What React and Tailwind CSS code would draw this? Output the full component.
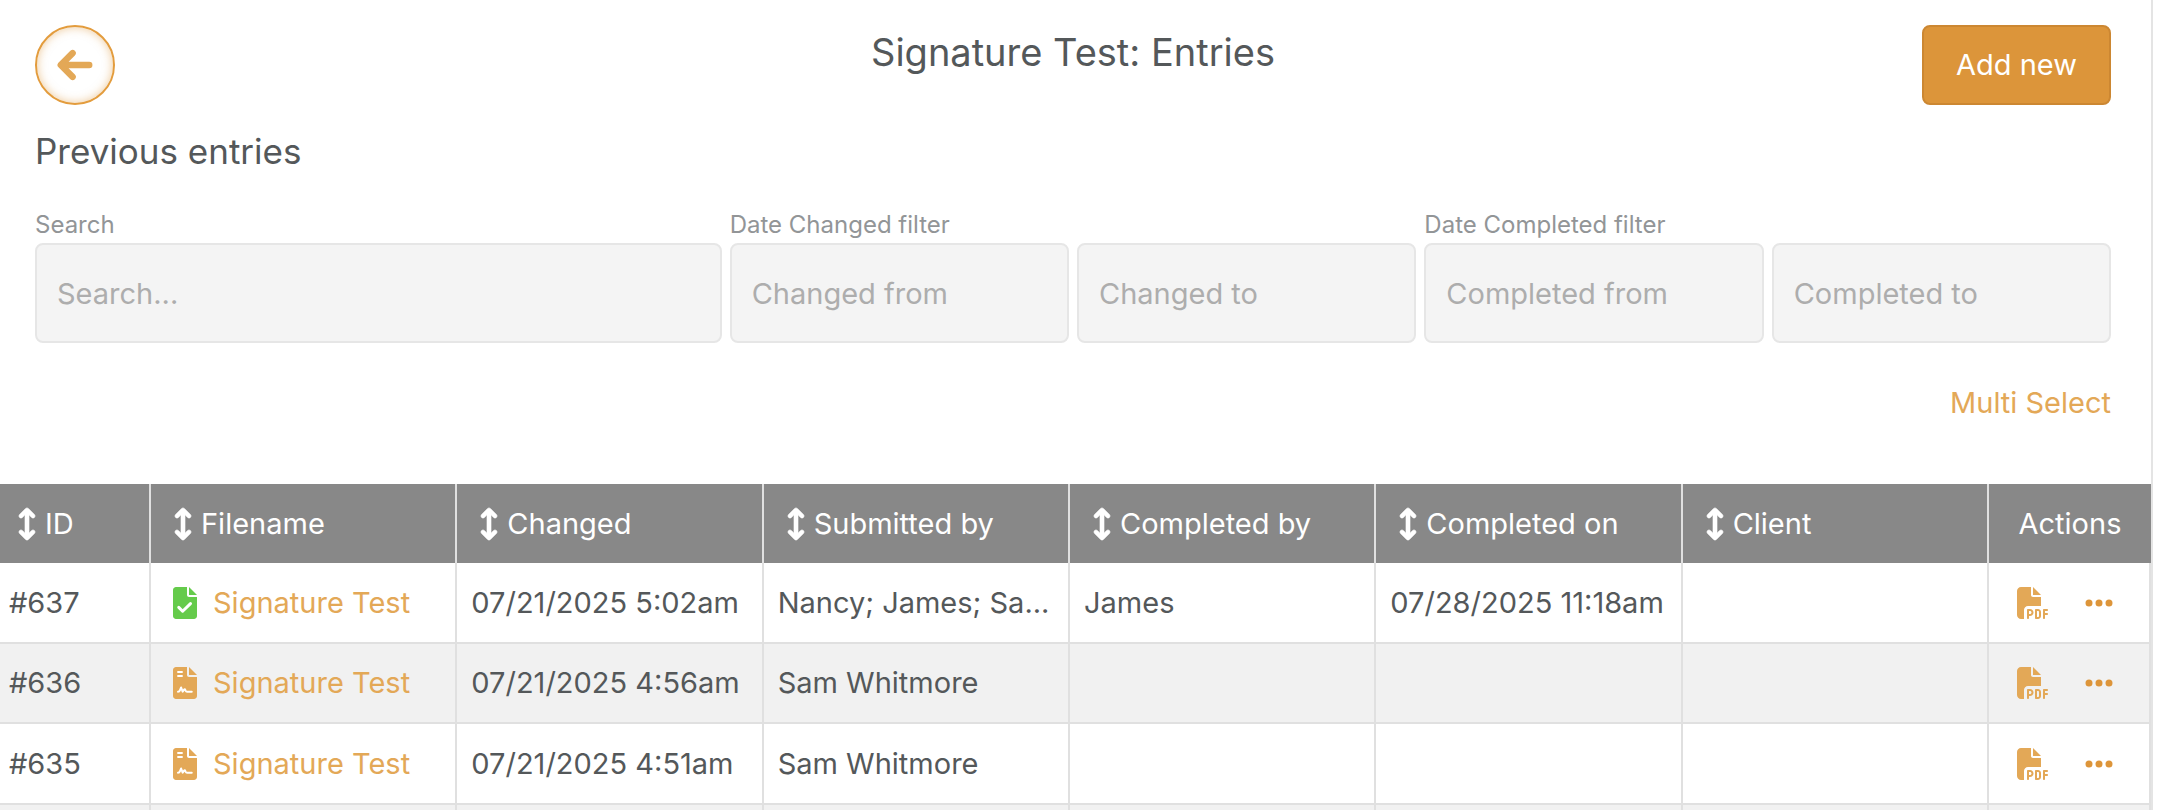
import React from "react";
import { FaArrowLeft, FaArrowsUpDown, FaEllipsis, FaFilePdf } from "react-icons/fa6";

const columns = ["ID", "Filename", "Changed", "Submitted by", "Completed by", "Completed on", "Client"];

const entries = [
  {
    id: "#637",
    filename: "Signature Test",
    complete: true,
    changed: "07/21/2025 5:02am",
    submittedBy: "Nancy; James; Sa...",
    completedBy: "James",
    completedOn: "07/28/2025 11:18am",
  },
  { id: "#636", filename: "Signature Test", changed: "07/21/2025 4:56am", submittedBy: "Sam Whitmore" },
  { id: "#635", filename: "Signature Test", changed: "07/21/2025 4:51am", submittedBy: "Sam Whitmore" },
];

const labelClass = "col-span-2 text-[24px] leading-7 text-[#929597]";
const inputClass =
  "h-[100px] w-full min-w-0 rounded-lg border-2 border-[#e6e6e6] bg-[#f4f4f4] px-5 text-[29px] text-[#54585a] placeholder:text-[#adadad]";
const cellClass = "border-r-2 border-b-2 border-[#e0e0e0] px-[14px]";

// File icon, either ticked off or still waiting for a signature
const FileIcon = ({ complete }) => (
  <svg
    viewBox="0 0 384 512"
    className={complete ? "h-8 w-6 shrink-0 text-[#65cb4b]" : "h-8 w-6 shrink-0 text-[#e3a857]"}
    fill="none"
    aria-hidden="true"
  >
    <path
      fill="currentColor"
      d="M224 128V0H48C21.5 0 0 21.5 0 48v416c0 26.5 21.5 48 48 48h288c26.5 0 48-21.5 48-48V160H256c-17.7 0-32-14.3-32-32zM256 0v128h128L256 0z"
    />
    {complete ? (
      <path stroke="#fff" strokeWidth="48" strokeLinecap="round" strokeLinejoin="round" d="M92 326l62 62 126-122" />
    ) : (
      <g stroke="#fff" strokeLinecap="round" strokeLinejoin="round">
        <path strokeWidth="30" d="M80 80h64M80 144h64" />
        <path strokeWidth="32" d="M80 396c18 0 26-8 32-26l18-42 24 66 24-32c6-8 14-8 18 2l6 16c4 12 12 16 24 16h74" />
      </g>
    )}
  </svg>
);

const Header = () => (
  <header className="grid grid-cols-[1fr_auto_1fr] items-start">
    <button
      aria-label="Back"
      className="flex size-20 items-center justify-center rounded-full border-2 border-[#e39c3d] text-[38px] text-[#e3a857] shadow-[inset_0_0_10px_rgba(221,149,58,0.5)]"
    >
      <FaArrowLeft className="overflow-visible stroke-current stroke-[22px]" />
    </button>
    <h1 className="text-[38px] leading-[54px]">Signature Test: Entries</h1>
    <button className="h-20 justify-self-end rounded-lg border-2 border-[#cc8732] bg-[#dc953a] px-8 text-[29px] text-white">
      Add new
    </button>
  </header>
);

const Filters = () => (
  <form className="mt-9 grid grid-cols-6 gap-x-2 gap-y-1">
    <label htmlFor="search" className={labelClass}>
      Search
    </label>
    <label htmlFor="changed-from" className={labelClass}>
      Date Changed filter
    </label>
    <label htmlFor="completed-from" className={labelClass}>
      Date Completed filter
    </label>
    <div className="col-span-2">
      <input id="search" type="text" placeholder="Search..." className={inputClass} />
    </div>
    <input id="changed-from" type="text" placeholder="Changed from" className={inputClass} />
    <input type="text" aria-label="Changed to" placeholder="Changed to" className={inputClass} />
    <input id="completed-from" type="text" placeholder="Completed from" className={inputClass} />
    <input type="text" aria-label="Completed to" placeholder="Completed to" className={inputClass} />
  </form>
);

const EntriesTable = () => (
  <table className="w-full table-fixed border-separate border-spacing-0 text-left text-[29px] whitespace-nowrap">
    <colgroup>
      <col className="w-[151px]" />
      <col span={6} />
      <col className="w-[162px]" />
    </colgroup>
    <thead>
      <tr className="h-[79px] bg-[#888888] text-white">
        {columns.map((name) => (
          <th key={name} className="border-r-2 border-[#e0e0e0] p-0 pl-[22px] font-normal first:pl-[17px]">
            <button className="flex items-center gap-2">
              <FaArrowsUpDown className="h-8 w-5 overflow-visible stroke-current stroke-[10px]" />
              {name}
            </button>
          </th>
        ))}
        <th className="p-0 text-center font-normal">Actions</th>
      </tr>
    </thead>
    <tbody>
      {entries.map((entry) => (
        <tr key={entry.id} className="h-[81px] even:h-20 even:bg-[#f1f1f1]">
          <td className="border-r-2 border-b-2 border-[#e0e0e0] px-[9px]">{entry.id}</td>
          <td className="border-r-2 border-b-2 border-[#e0e0e0] px-[22px]">
            <a href="#" className="flex items-center gap-4 text-[#e3a857]">
              <FileIcon complete={entry.complete} />
              {entry.filename}
            </a>
          </td>
          <td className={cellClass}>{entry.changed}</td>
          <td className={cellClass}>{entry.submittedBy}</td>
          <td className={cellClass}>{entry.completedBy}</td>
          <td className={cellClass}>{entry.completedOn}</td>
          <td className={cellClass}></td>
          <td className="border-r-2 border-b-2 border-[#e0e0e0] pl-7">
            <div className="flex items-center gap-[34px] text-[32px]">
              <button aria-label="Download PDF" className="text-[#e3a857]">
                <FaFilePdf />
              </button>
              <button aria-label="More actions" className="text-[#dd953a]">
                <FaEllipsis />
              </button>
            </div>
          </td>
        </tr>
      ))}
      {/* next row is still empty */}
      <tr className="h-20 even:bg-[#f1f1f1]">
        {[...columns, "Actions"].map((name) => (
          <td key={name} className={cellClass}></td>
        ))}
      </tr>
    </tbody>
  </table>
);

export default function App() {
  return (
    <div className="h-screen overflow-hidden bg-white pr-[5px] font-['Inter',sans-serif] text-[#54585a]">
      <main className="min-h-full border-r-2 border-[#e4e4e4]">
        <div className="pt-[25px] pr-10 pl-[35px]">
          <Header />
          <h2 className="mt-[22px] text-[35px] leading-[48px]">Previous entries</h2>
          <Filters />
          <div className="mt-10 mb-[61px] flex justify-end">
            <a href="#" className="text-[29px] leading-10 text-[#e3a857]">
              Multi Select
            </a>
          </div>
        </div>
        <EntriesTable />
      </main>
    </div>
  );
}
